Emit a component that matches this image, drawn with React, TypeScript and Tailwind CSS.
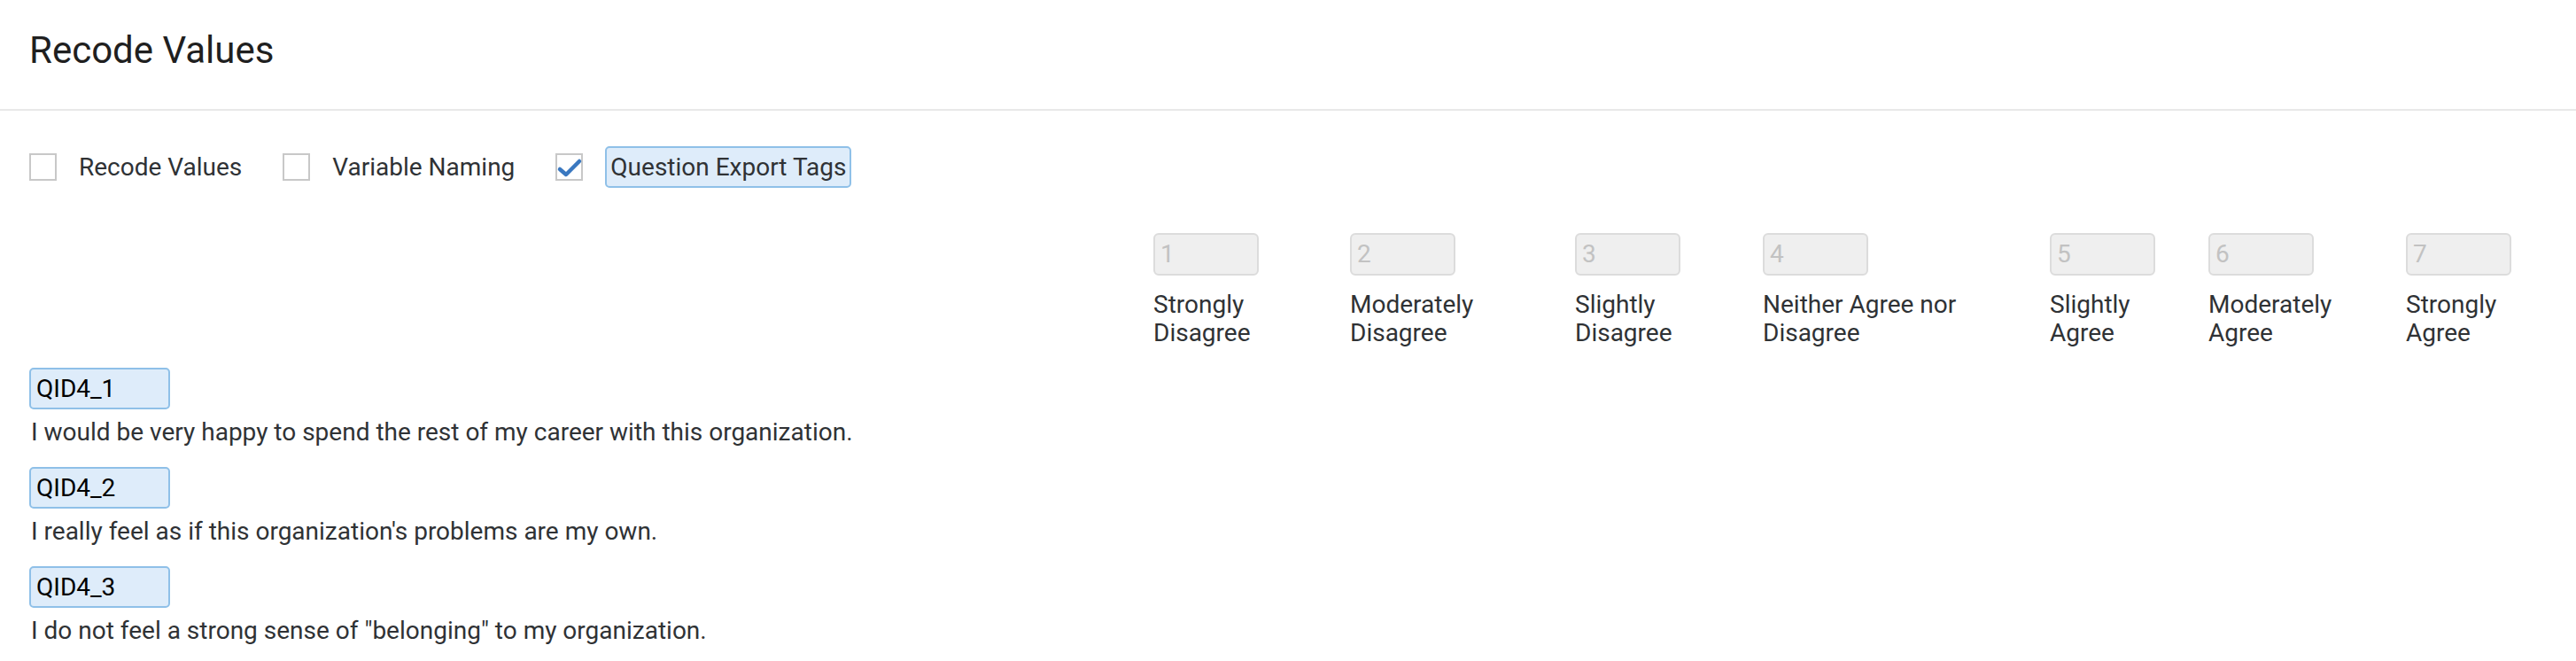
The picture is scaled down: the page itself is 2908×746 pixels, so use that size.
const scale = [
  { value: "1", top: "Strongly", bottom: "Disagree", width: "w-[222px]" },
  { value: "2", top: "Moderately", bottom: "Disagree", width: "w-[254px]" },
  { value: "3", top: "Slightly", bottom: "Disagree", width: "w-[212px]" },
  { value: "4", top: "Neither Agree nor", bottom: "Disagree", width: "w-[324px]" },
  { value: "5", top: "Slightly", bottom: "Agree", width: "w-[179px]" },
  { value: "6", top: "Moderately", bottom: "Agree", width: "w-[223px]" },
  { value: "7", top: "Strongly", bottom: "Agree", width: "flex-1" },
];

const questions = [
  { tag: "QID4_1", text: "I would be very happy to spend the rest of my career with this organization." },
  { tag: "QID4_2", text: "I really feel as if this organization's problems are my own." },
  { tag: "QID4_3", text: 'I do not feel a strong sense of "belonging" to my organization.' },
];

const Checkbox = ({ checked }: { checked?: boolean }) => (
  <span className="w-[31px] h-[31px] border-2 border-[#c8c8c8] bg-white flex items-center justify-center shrink-0">
    {checked && (
      <svg width="31" height="31" viewBox="0 0 31 31" className="-m-[2px]">
        <path d="M5 18 L12 24 L27 9" fill="none" stroke="#3a78c0" strokeWidth="4.5" strokeLinecap="round" strokeLinejoin="round" />
      </svg>
    )}
  </span>
);

const App = () => {
  return (
    <div className="min-h-screen bg-white font-['Roboto','Liberation_Sans',sans-serif] text-[#2f3235]">
      <header className="px-[33px] pt-[33px] pb-[42px]">
        <h1 className="text-[42px] leading-[48px] text-[#1f1f1f]">Recode Values</h1>
      </header>
      <div className="h-[2px] bg-[#e8e8e8]" />

      <main className="px-[33px]">
        {/* options */}
        <div className="pt-[40px] flex items-center h-[87px] text-[28px] leading-[32px]">
          <label className="flex items-center gap-[25px]">
            <Checkbox />
            <span>Recode Values</span>
          </label>
          <label className="flex items-center gap-[25px] ml-[46px]">
            <Checkbox />
            <span>Variable Naming</span>
          </label>
          <label className="flex items-center gap-[25px] ml-[46px]">
            <Checkbox checked />
            <span className="h-[47px] px-[4px] flex items-center rounded-[5px] border-2 border-[#8fc0e8] bg-[#deecfa]">
              Question Export Tags
            </span>
          </label>
        </div>

        {/* scale header */}
        <div className="flex mt-[51px] text-[28px] leading-[32px]">
          <div className="w-[1269px] shrink-0" />
          {scale.map((s) => (
            <div key={s.value} className={`${s.width} shrink-0`}>
              <div className="w-[119px] h-[48px] rounded-[6px] border-2 border-[#dcdcdc] bg-[#efefef] text-[#c2c2c2] px-[6px] flex items-center">
                {s.value}
              </div>
              <div className="mt-[17px]">
                {s.top}
                <br />
                {s.bottom}
              </div>
            </div>
          ))}
        </div>

        {/* questions */}
        <div className="mt-[23px] text-[28px] leading-[32px]">
          {questions.map((q) => (
            <div key={q.tag} className="mb-[23px]">
              <div className="w-[159px] h-[47px] rounded-[5px] border-2 border-[#8fc0e8] bg-[#deecfa] text-black px-[6px] flex items-center">
                {q.tag}
              </div>
              <p className="mt-[10px] pl-[2px]">{q.text}</p>
            </div>
          ))}
        </div>
      </main>
    </div>
  );
};

export default App;
